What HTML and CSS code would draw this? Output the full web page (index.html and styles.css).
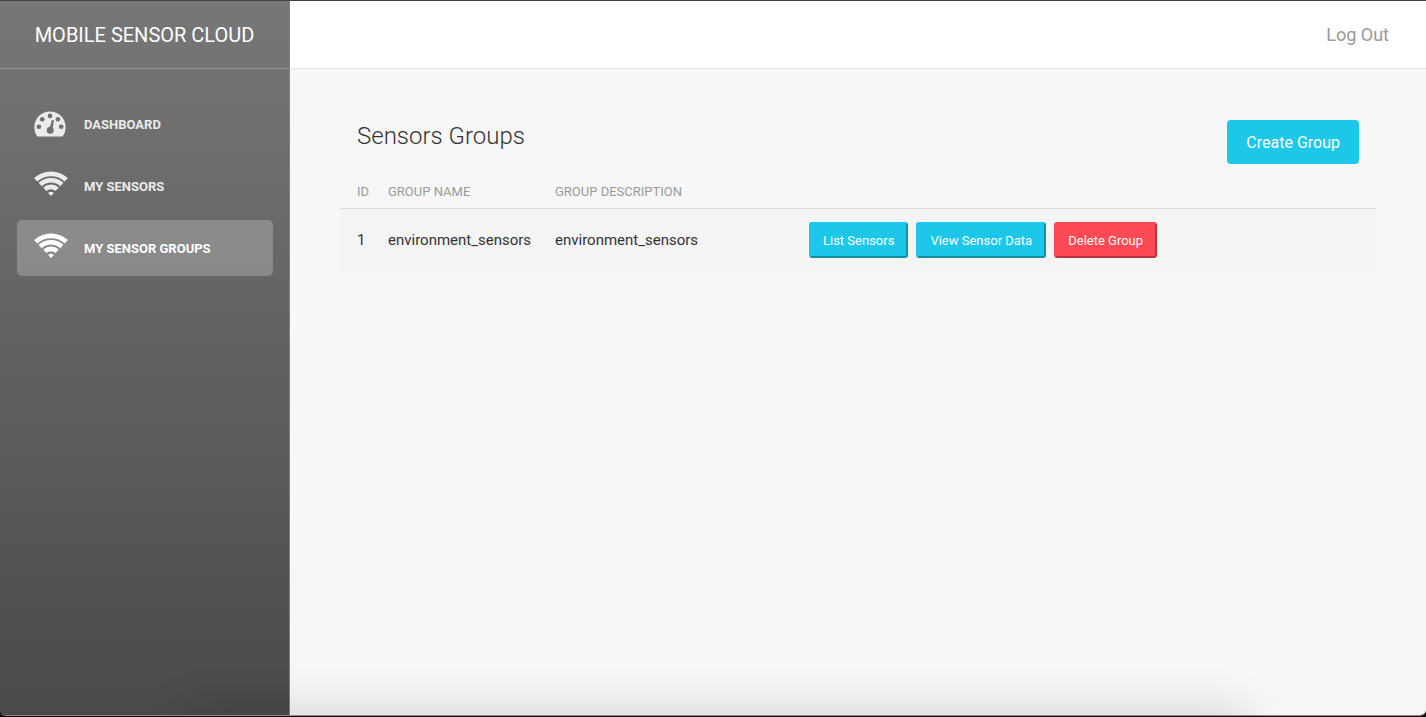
FILE: index.html
```html
<!DOCTYPE html>
<html lang="en">
<head>
<meta charset="utf-8">
<title>Mobile Sensor Cloud</title>
<link rel="stylesheet" href="styles.css">
</head>
<body>
<svg class="defs" aria-hidden="true">
  <symbol id="wifi" viewBox="0 0 34 26">
    <g fill="none" stroke="currentColor" stroke-width="4.700">
      <path d="M1.700 8.800A22.500 22.500 0 0 1 32.300 8.800"/>
      <path d="M6.200 13.500A15.800 15.800 0 0 1 27.800 13.500"/>
      <path d="M10.800 18.200A9.200 9.200 0 0 1 23.200 18.200"/>
    </g>
    <path fill="currentColor" d="M14.100 21.900Q17 19.400 19.900 21.900L17 24.900Z"/>
  </symbol>
  <symbol id="gauge" viewBox="0 0 32 26">
    <path fill="currentColor" d="M3.400 25.500C1.200 22.600.400 19.600.400 16.200C.400 7.400 7.400.600 16 .600S31.600 7.400 31.600 16.200C31.600 19.600 30.800 22.600 28.600 25.500Z"/>
    <g fill="#6f6f6f">
      <circle cx="4.900" cy="15.800" r="2.300"/>
      <circle cx="8.200" cy="8.200" r="2.300"/>
      <circle cx="16" cy="4.900" r="2.300"/>
      <circle cx="23.900" cy="8.200" r="2.300"/>
      <circle cx="27.200" cy="15.800" r="2.300"/>
      <circle cx="16.200" cy="19.300" r="3.500"/>
      <path d="M17.800 9.400Q19 8.200 19.900 9.600L18.500 18.500L15.300 18Z"/>
    </g>
  </symbol>
</svg>
<div class="window">
  <aside class="sidebar">
    <div class="brand"><a href="#">MOBILE SENSOR CLOUD</a></div>
    <nav class="nav">
      <a class="nav-link" href="#"><svg class="icon gauge"><use href="#gauge"/></svg>Dashboard</a>
      <a class="nav-link" href="#"><svg class="icon"><use href="#wifi"/></svg>My Sensors</a>
      <a class="nav-link active" href="#" aria-current="page"><svg class="icon"><use href="#wifi"/></svg>My Sensor Groups</a>
    </nav>
  </aside>
  <div class="panel">
    <header class="topbar"><a href="#">Log Out</a></header>
    <main class="content">
      <div class="heading">
        <h1>Sensors Groups</h1>
        <button class="create" type="button">Create Group</button>
      </div>
      <table class="groups">
        <thead>
          <tr><th class="id">ID</th><th class="name">Group Name</th><th class="description">Group Description</th><th class="actions" aria-label="Actions"></th></tr>
        </thead>
        <tbody>
          <tr>
            <td>1</td><td>environment_sensors</td><td>environment_sensors</td>
            <td><div class="buttons">
              <button class="small" type="button">List Sensors</button>
              <button class="small" type="button">View Sensor Data</button>
              <button class="small danger" type="button">Delete Group</button>
            </div></td>
          </tr>
        </tbody>
      </table>
    </main>
  </div>
  <div class="dock-shade"></div>
</div>
</body>
</html>
```
FILE: styles.css
```css
* { box-sizing: border-box; }
body {
  margin: 0;
  background: #0c0c0e;
  font-family: Roboto, "Liberation Sans", sans-serif;
  color: #333;
}
a { color: inherit; text-decoration: none; }
button { font: inherit; cursor: pointer; }
.defs { position: absolute; width: 0; height: 0; }
.window {
  position: relative;
  display: flex;
  height: calc(100vh - 1px);
  overflow: hidden;
  border-top: 1px solid #424242;
  border-bottom: 1px solid #8a8a8a;
  border-radius: 0 0 6px 6px;
}
.sidebar {
  flex: 0 0 290px;
  background: linear-gradient(#777, #4a4a4a);
  border-right: 1px solid #808080;
  color: #fff;
}
.brand {
  display: flex;
  align-items: center;
  justify-content: center;
  height: 68px;
  border-bottom: 1px solid #929292;
  font-size: 20px;
}
.nav {
  display: flex;
  flex-direction: column;
  gap: 6px;
  padding: 27px 16px 0 17px;
}
.nav-link {
  display: flex;
  align-items: center;
  gap: 16px;
  height: 56px;
  padding-left: 17px;
  border-radius: 5px;
  font-size: 13px;
  font-weight: 700;
  text-transform: uppercase;
  color: #ebebeb;
}
.active { background: rgba(255, 255, 255, .23); color: #fff; }
.icon { width: 34px; height: 26px; margin-bottom: 4px; }
.gauge { padding-right: 2px; margin-bottom: 0; }
.panel { flex: 1; background: #f7f7f7; }
.topbar {
  display: flex;
  align-items: center;
  justify-content: flex-end;
  height: 68px;
  padding-right: 37px;
  background: #fff;
  border-bottom: 1px solid #e4e4e4;
  color: #999;
  font-size: 18px;
}
.content { padding: 51px 50px 0; }
.heading {
  display: flex;
  justify-content: space-between;
  align-items: flex-start;
  padding: 0 17px;
}
h1 { margin: 0; font-size: 24px; line-height: 32px; font-weight: 300; }
.create {
  height: 44px;
  padding: 0 19px;
  border: 0;
  border-radius: 4px;
  background: #1dc7ea;
  color: #fff;
  font-size: 16px;
}
.groups {
  width: 100%;
  margin-top: 11px;
  border-collapse: collapse;
  table-layout: fixed;
}
th, td { padding: 0 9px; text-align: left; }
th {
  height: 33px;
  border-bottom: 1px solid #ddd;
  color: #9a9a9a;
  font-size: 13px;
  font-weight: 400;
  text-transform: uppercase;
}
td { height: 64px; background: #f4f4f4; font-size: 15px; }
th:first-child, td:first-child { padding-left: 17px; padding-right: 0; }
.id { width: 39px; }
.name { width: 167px; }
.description { width: 254px; }
.buttons { display: flex; gap: 8px; }
.small {
  height: 36px;
  padding: 0 12px;
  border: 2px solid #1dc7ea;
  border-right-color: #158fa8;
  border-bottom-color: #158fa8;
  border-radius: 3px;
  background: #1dc7ea;
  color: #fff;
  font-size: 13px;
}
.danger {
  border-color: #ff4a55 #b8353d #b8353d #ff4a55;
  background: #ff4a55;
}
.dock-shade {
  position: absolute;
  top: 100%;
  left: 13%;
  right: 13%;
  height: 60px;
  box-shadow: 0 0 48px 4px rgba(0, 0, 0, .14);
}
```
